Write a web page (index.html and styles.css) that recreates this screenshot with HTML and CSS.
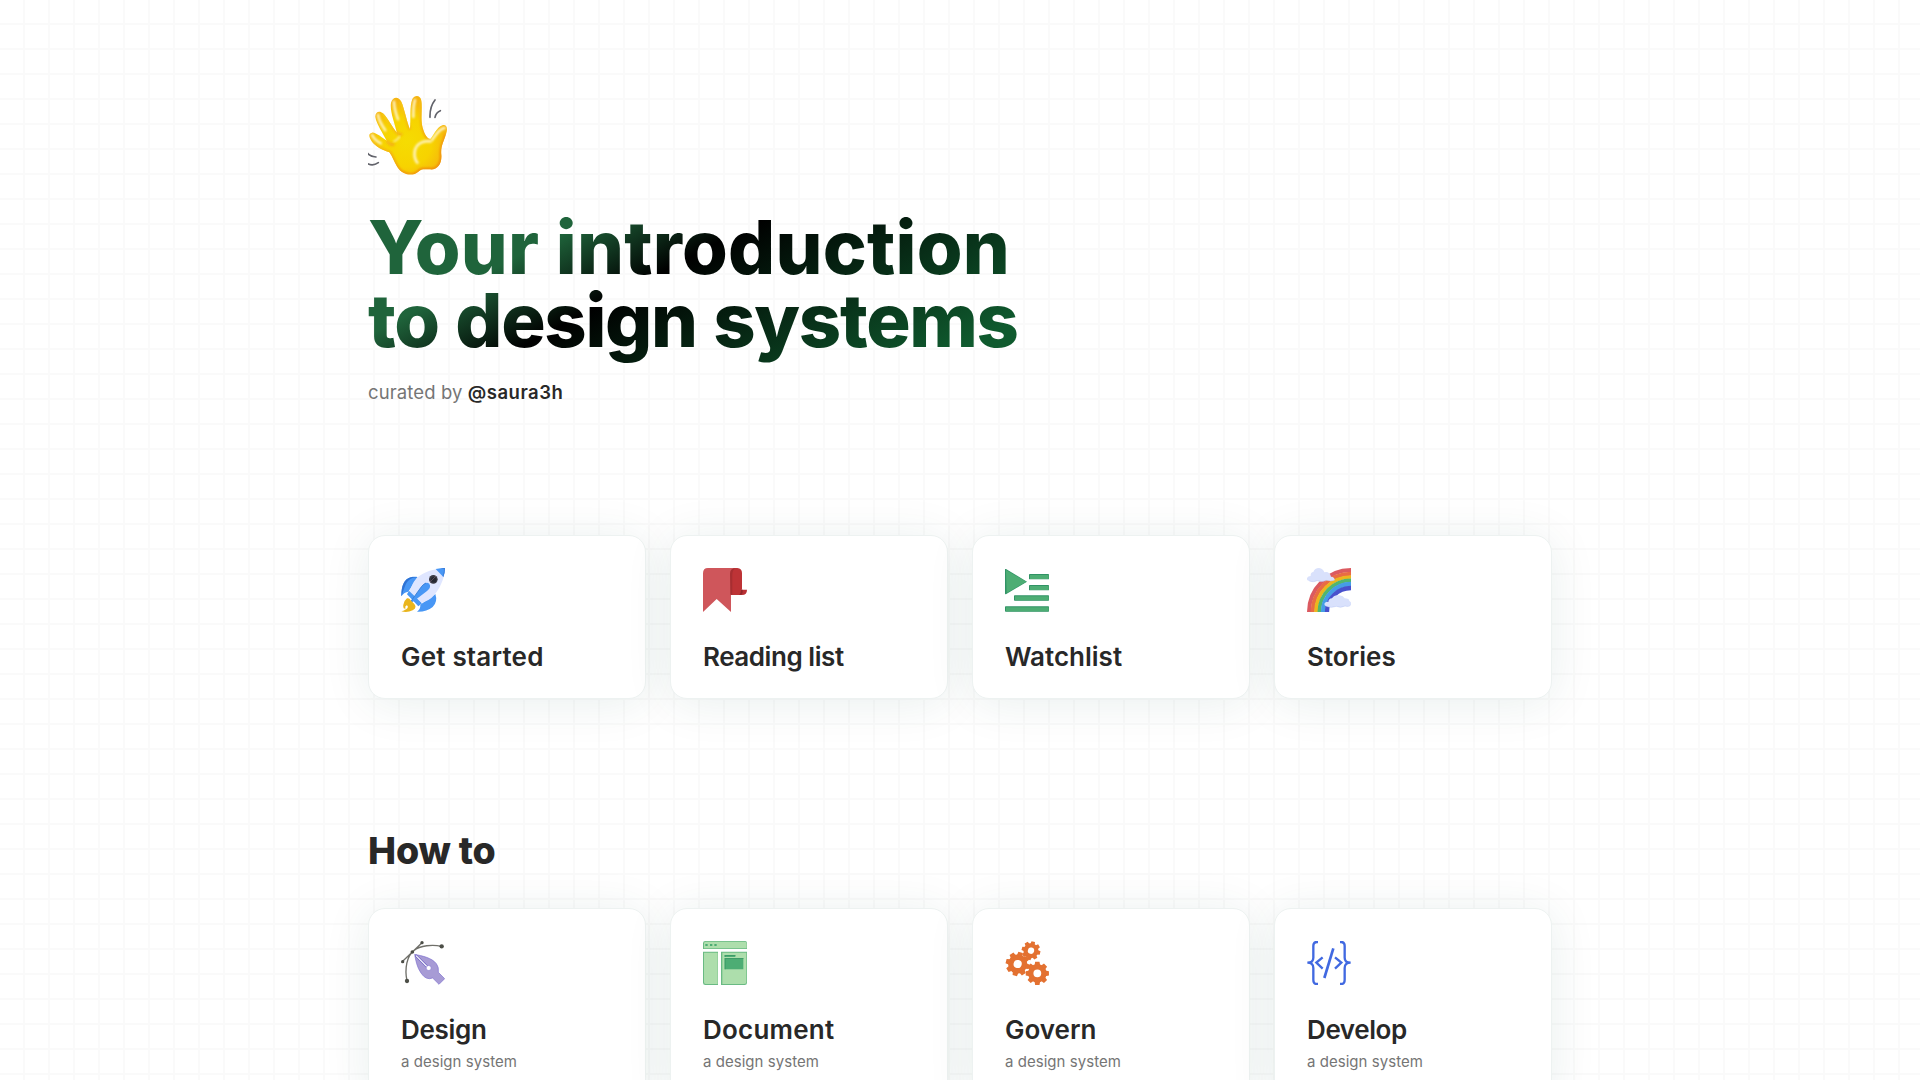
FILE: index.html
```html
<!DOCTYPE html>
<html lang="en">
<head>
<meta charset="utf-8">
<title>Your introduction to design systems</title>
<link rel="stylesheet" href="styles.css">
</head>
<body>
<main class="page">
  <header class="hero">
    <svg class="wave" viewBox="54 48 240 240" aria-hidden="true">
      <defs>
        <radialGradient id="skin" gradientUnits="userSpaceOnUse" cx="170" cy="185" r="125"><stop offset="0" stop-color="#f5dc02"/><stop offset=".6" stop-color="#f7d300"/><stop offset="1" stop-color="#f5b40e"/></radialGradient>
        <linearGradient id="edge" gradientUnits="userSpaceOnUse" x1="100" y1="90" x2="240" y2="260"><stop offset="0" stop-color="#f7cf1c"/><stop offset="1" stop-color="#f08a0c"/></linearGradient>
        <filter id="soft" x="-20%" y="-20%" width="140%" height="140%"><feGaussianBlur stdDeviation="3"/></filter>
        <clipPath id="handclip"><path d="M118 217C100 211 77 201 65 184C55 169 56 160 66 158C76 156 98 174 110 182C99 161 79 131 76 111C75 96 88 90 99 100C112 112 127 143 141 158C133 128 119 92 123 68C128 49 146 48 154 65C163 85 171 128 180 148C183 117 178 79 187 57C194 44 212 45 214 62C218 94 209 122 221 153C226 167 234 177 241 177C249 169 260 142 277 136C291 132 294 147 288 162C282 184 271 199 274 225C276 250 263 270 240 268C221 267 213 266 204 276C190 289 158 287 142 261C131 244 128 229 118 217Z"/></clipPath>
      </defs>
      <g clip-path="url(#handclip)">
        <path fill="url(#skin)" d="M50 40H300V295H50Z"/>
        <path fill="none" stroke="url(#edge)" stroke-width="9" filter="url(#soft)" d="M118 217C100 211 77 201 65 184M110 182C120 194 127 198 132 190M141 158C148 165 152 165 156 160M154 65C163 85 171 128 180 148M214 62C218 94 209 122 221 153C226 167 234 177 241 177M288 162C282 184 271 199 274 225C276 250 263 270 240 268C221 267 213 266 204 276C190 289 158 287 142 261C131 244 128 229 118 217M99 100C112 112 127 143 141 158"/>
        <path fill="none" stroke="#fff8d0" stroke-width="7" stroke-linecap="round" filter="url(#soft)" d="M66 165C72 177 81 184 92 190M84 104C86 123 97 138 106 151M132 65C132 84 139 104 144 118M195 60C189 77 190 99 190 111M284 144C270 144 256 166 246 180"/>
        <path fill="none" stroke="#fff3bd" stroke-width="8" stroke-linecap="round" filter="url(#soft)" d="M241 184C215 181 197 194 194 215C192 231 197 242 202 248"/>
        <path fill="none" stroke="#fff3bd" stroke-width="4" stroke-linecap="round" filter="url(#soft)" d="M132 184Q142 181 149 169"/>
      </g>
      <path d="M255 60Q239 80 240 112M271 92Q258 97 255 112M52 219Q61 230 78 231M53 251Q69 259 85 248" fill="none" stroke="#62636b" stroke-width="5" stroke-linecap="round"/>
    </svg>
    <h1 class="headline"><span class="headline-first">Your introduction</span><br><span class="headline-second">to design systems</span></h1>
    <p class="byline"><span class="byline-label">curated by</span> <a class="byline-author">@saura3h</a></p>
  </header>

  <section class="cards">
    <a class="card">
      <svg class="icon" viewBox="33 39 132 132" aria-hidden="true">
        <path fill="#4897f5" d="M83 66C62 63 48 70 41 85Q34 99 34 124Q43 111 55 110ZM136 117Q144 140 128 156Q110 171 81 170Q92 162 91 149Z"/>
        <path fill="#2f73d4" d="M82 67C65 67 51 76 45 94Q39 108 36 120L34 124Q34 98 41 85C49 68 65 64 82 67Z"/>
        <path fill="#dfe6ff" d="M151 41C119 44 90 56 76 74Q65 87 60 110L93 144Q119 137 133 120C148 102 161 75 164 52Z"/>
        <path fill="#4897f5" d="M137 42Q153 39 165 39Q165 52 160 66Z"/>
        <path fill="#3b7edc" d="M151 40L165 39Q165 53 160 66L158 63Q162 51 162 43Z"/>
        <path fill="#4897f5" d="M57 107L96 145L85 154L51 118Z"/>
        <path fill="#dfe6ff" d="M59 105L64 99L104 138L95 144Z"/>
        <circle cx="130" cy="73" r="13" fill="#393944"/><circle cx="131" cy="74" r="8" fill="#252831"/><path d="M120 81L138 63" stroke="#746071" stroke-width="2"/>
        <path fill="#4897f5" d="M107 84Q118 81 120 91Q122 100 111 108L63 145Q60 145 62 140L95 94Q100 87 107 84Z"/>
        <path fill="none" stroke="#3378d2" stroke-width="2.5" d="M108 84Q101 87 95 94L62 140"/>
        <path fill="#e9b51c" d="M51 130Q58 128 62 136L73 147Q82 158 68 166Q52 174 34 169Q44 168 47 161Q38 163 40 149Q43 136 51 130Z"/><path fill="#fff" d="M50 151Q56 154 52 160Q49 164 43 165Q49 159 45 156Z"/>
      </svg>
      <h3 class="card-title title-start">Get started</h3>
    </a>
    <a class="card">
      <svg class="icon" viewBox="39 39 132 132" aria-hidden="true">
        <path fill="#bd3336" d="M122 39H142Q156 40 156 54V104H153V120H122Z"/>
        <path fill="#cf565b" d="M54 39H137Q123 40 123 56V171L80 132L39 171V55Q39 39 54 39Z"/>
        <path fill="#a72e31" d="M120 56Q120 40 137 39Q128 43 127 58V119H121Z"/>
        <path fill="#b93034" d="M153 104H171Q171 120 156 120H148Q153 115 153 104Z"/><path fill="#8f2628" d="M153 104H158V111Q158 116 154 119H148Q153 115 153 104Z"/>
      </svg>
      <h3 class="card-title title-reading">Reading list</h3>
    </a>
    <a class="card">
      <svg class="icon" viewBox="45 39 132 132" aria-hidden="true">
        <path fill="#309365" d="M45 43Q45 41 48 42L111 80L49 117Q45 119 45 115Z"/><path fill="#4dad74" d="M48 45L109 80L50 114Z"/>
        <g fill="#309365"><rect x="117" y="57" width="60" height="16" rx="2"/><rect x="117" y="90" width="60" height="16" rx="2"/><rect x="72" y="121" width="105" height="16" rx="2"/><rect x="45" y="154" width="132" height="16" rx="2"/></g>
        <g fill="#4dad74"><path d="M120 60H176V72H120ZM120 93H176V105H120ZM75 124H176V136H75ZM48 157H176V169H48Z"/></g>
      </svg>
      <h3 class="card-title">Watchlist</h3>
    </a>
    <a class="card">
      <svg class="icon" viewBox="36 39 132 132" aria-hidden="true">
        <path d="M42 171A126 126 0 0 1 168 45" fill="none" stroke="#db5a60" stroke-width="12"/>
        <path d="M53 171A115 115 0 0 1 168 56" fill="none" stroke="#e96c43" stroke-width="12"/>
        <path d="M63 171A105 105 0 0 1 168 66" fill="none" stroke="#ecb61e" stroke-width="11"/>
        <path d="M73 171A95 95 0 0 1 168 76" fill="none" stroke="#52b66e" stroke-width="11"/>
        <path d="M84 171A84 84 0 0 1 168 87" fill="none" stroke="#459de6" stroke-width="13"/>
        <path d="M96 171A72 72 0 0 1 168 99" fill="none" stroke="#4850cd" stroke-width="13"/>
        <path fill="#d9e1fc" d="M43 78Q34 76 36 69Q39 63 47 63Q46 52 55 51Q59 39 72 39Q85 41 88 52Q103 48 108 65Q119 66 119 75Q109 80 94 76Q80 83 67 77Q54 83 43 78ZM94 154Q86 151 89 145Q92 139 100 141Q101 130 111 130Q118 118 134 121Q145 122 149 130Q163 130 163 138Q170 141 168 148Q164 157 150 153Q137 160 124 154Q108 160 94 154Z"/>
        <path d="M43 78Q54 83 67 77Q80 83 94 76Q109 80 119 75M94 154Q108 160 124 154Q137 160 150 153Q164 157 168 148" fill="none" stroke="#b9c6f5" stroke-width="1.5"/>
      </svg>
      <h3 class="card-title">Stories</h3>
    </a>
  </section>

  <h2 class="section-title">How to</h2>
  <section class="cards">
    <a class="card card-tall">
      <svg class="icon" viewBox="33 33 132 132" aria-hidden="true">
        <path d="M38 94L96 38M51 153C43 115 51 78 71 62C91 46 127 43 155 49" fill="none" stroke="#70706a" stroke-width="4"/>
        <g fill="#4c4e47"><circle cx="38" cy="95" r="5"/><circle cx="96" cy="38" r="5"/><circle cx="67" cy="66" r="5.5"/><circle cx="51" cy="153" r="6.5"/><circle cx="155" cy="49" r="6.5"/></g>
        <path fill="#a79bd5" stroke="#7d70cf" stroke-width="2" d="M74 73C97 78 125 83 139 101Q147 111 145 127L164 146L147 163L128 144Q108 152 93 129C81 112 77 91 74 73Z"/>
        <path d="M77 76L114 113" stroke="#6459c1" stroke-width="7"/><path d="M78 77L115 114" stroke="#fff" stroke-width="3.5"/><circle cx="116" cy="114" r="7.5" fill="#fff" stroke="#7567ca" stroke-width="1.5"/>
      </svg>
      <h3 class="card-title title-design">Design</h3><p class="card-note">a design system</p>
    </a>
    <a class="card card-tall">
      <svg class="icon" viewBox="39 33 132 132" aria-hidden="true">
        <path fill="#69ba83" d="M46 33H165Q171 33 171 40V57H39V40Q39 33 46 33ZM39 65H84V165H46Q39 165 39 158ZM93 65H171V158Q171 165 164 165H93Z"/>
        <path fill="#addeac" d="M47 35H164Q170 35 170 41V55H42V40Q42 35 47 35ZM42 68H83V162H47Q42 162 42 157ZM97 68H169V157Q169 162 163 162H97Z"/>
        <path fill="#4dad74" d="M46 42H53V48H46ZM60 42H67V48H60ZM73 42H80V48H73ZM104 75H136V81H104ZM104 84H160V118H104Z"/><path fill="#3d9b68" d="M104 75H136V78H107V81H104ZM104 84H160V87H107V118H104Z"/>
      </svg>
      <h3 class="card-title title-document">Document</h3><p class="card-note">a design system</p>
    </a>
    <a class="card card-tall">
      <svg class="icon" viewBox="945 33 132 132" aria-hidden="true">
        <defs><g id="cog"><circle r="21" fill="none" stroke="#e37131" stroke-width="17"/><path fill="#e37131" d="M-7-37L7-37L9-25H-9ZM-7 37H7L9 25H-9ZM-37-7V7L-25 9V-9ZM37-7V7L25 9V-9Z"/><path transform="rotate(45)" fill="#e37131" d="M-7-37L7-37L9-25H-9ZM-7 37H7L9 25H-9ZM-37-7V7L-25 9V-9ZM37-7V7L25 9V-9Z"/></g></defs>
        <use href="#cog" transform="translate(1023 62) rotate(14) scale(.76)"/>
        <use href="#cog" transform="translate(983 102) rotate(14) scale(.97)"/>
        <use href="#cog" transform="translate(1042 130) scale(.94)"/>
      </svg>
      <h3 class="card-title">Govern</h3><p class="card-note">a design system</p>
    </a>
    <a class="card card-tall">
      <svg class="icon" viewBox="36 33 132 132" aria-hidden="true">
        <g fill="none" stroke="#4169e1" stroke-width="7"><path d="M69 36H66Q55 36 55 48V83Q55 98 37 98Q55 98 55 114V149Q55 162 66 162H69M135 36H138Q149 36 149 48V83Q149 98 167 98Q149 98 149 114V149Q149 162 138 162H135M83 82L64 98L83 116M120 82L139 98L120 116"/><path d="M115 55L88 144" stroke-width="8"/></g>
      </svg>
      <h3 class="card-title title-develop">Develop</h3><p class="card-note">a design system</p>
    </a>
  </section>
</main>
</body>
</html>
```
FILE: styles.css
```css
* { box-sizing: border-box; }
body {
  margin: 0;
  height: 1080px;
  overflow: hidden;
  color: #282828;
  font-family: Inter, "Liberation Sans", sans-serif;
  background-color: #fff;
  background-image:
    linear-gradient(to right, transparent 23.5px, #fafafa 23.5px),
    linear-gradient(to bottom, transparent 23.5px, #fafafa 23.5px);
  background-size: 25px 25px;
}
.page { width: 1184px; margin: 0 auto; padding-top: 96px; }
.hero { display: flex; flex-direction: column; align-items: flex-start; }
.wave { display: block; width: 80px; height: 80px; }
.headline {
  width: 660px;
  margin: 35px 0 0;
  padding-bottom: 10px;
  font-size: 74px;
  line-height: 73px;
  font-weight: 800;
  white-space: nowrap;
  color: transparent;
  background: linear-gradient(152deg, #1f643b 110px, #000 192px, #0f5a2e 400px);
  background-clip: text;
  -webkit-background-clip: text;
}
.headline-first { letter-spacing: .24px; }
.headline-second { letter-spacing: -1.3px; word-spacing: 1.6px; }
.byline { margin: 13px 0 0; font-size: 18.5px; line-height: 24px; color: #757575; }
.byline-label { letter-spacing: .12px; }
.byline-author { color: #282828; font-weight: 600; letter-spacing: .5px; }
.cards { display: grid; grid-template-columns: repeat(4, 278px); gap: 24px; margin-top: 131px; }
.card {
  height: 164px;
  padding: 32px;
  border: 1px solid #edf2f1;
  border-radius: 17px;
  background: #fff;
  box-shadow: 0 4px 48px rgba(8, 75, 65, .09);
}
.card-tall { height: 196px; }
.icon { display: block; width: 44px; height: 44px; }
.card-title { margin: 29px 0 0; font-size: 26px; line-height: 32px; font-weight: 600; white-space: nowrap; }
.title-start { letter-spacing: .2px; }
.title-reading { letter-spacing: -.45px; }
.title-design { letter-spacing: -.3px; }
.title-document { letter-spacing: .22px; }
.title-develop { letter-spacing: -.4px; }
.card-note { margin: 6px 0 0; font-size: 15px; line-height: 20px; letter-spacing: .04px; color: #757575; white-space: nowrap; }
.section-title { margin: 130px 0 0; font-size: 37.5px; line-height: 44px; font-weight: 800; letter-spacing: -.15px; }
.section-title + .cards { margin-top: 35px; }
```
